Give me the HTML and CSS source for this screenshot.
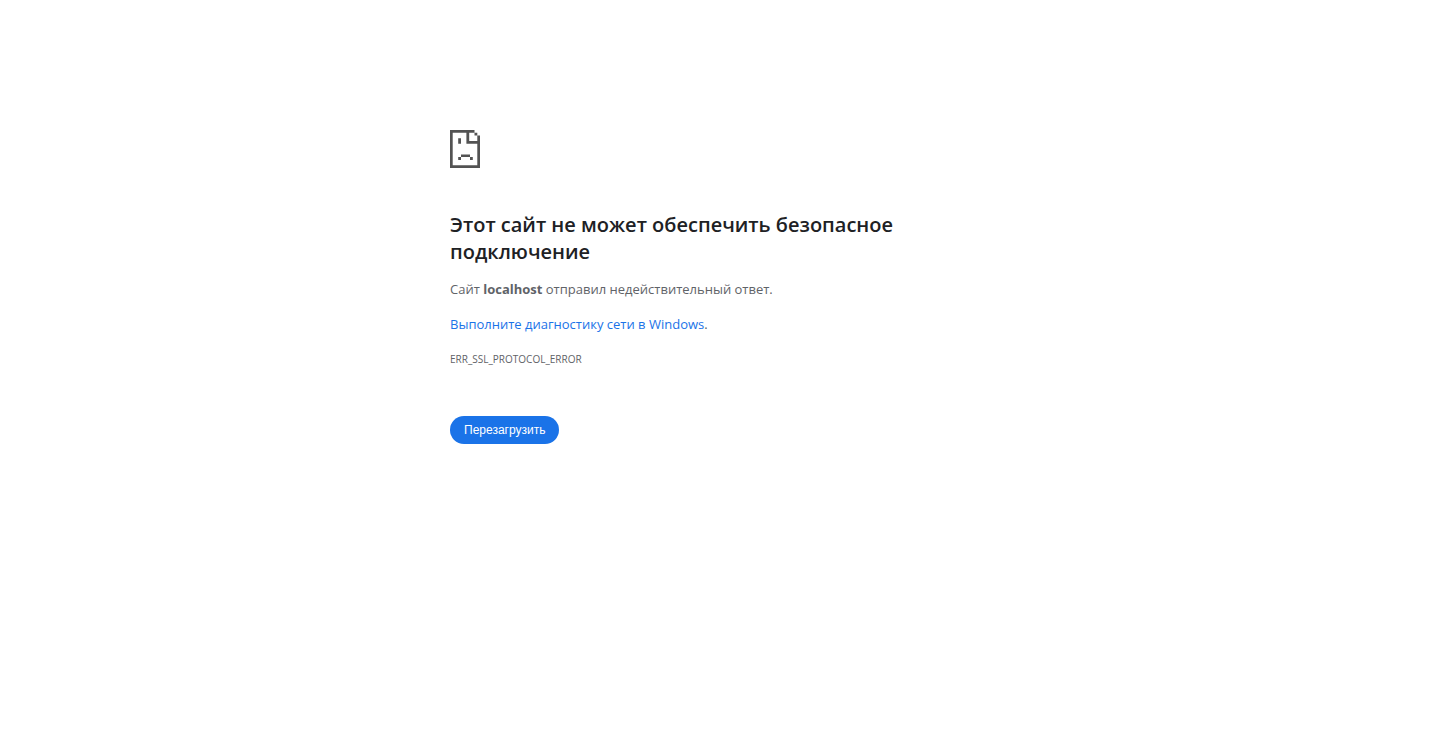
FILE: index.html
```html
<!DOCTYPE html>
<html lang="ru">
<head>
<meta charset="utf-8">
<title>localhost</title>
<link rel="stylesheet" href="styles.css">
</head>
<body>
<main class="error">
  <svg class="icon" viewBox="0 0 30 38" aria-hidden="true">
    <path fill="#535353" fill-rule="evenodd" d="M0 0H24.500V2.700H19.200V11H27.300V5.500H30V38H0ZM2.700 2.700V35.300H27.300V13.700H16.400V2.700ZM24.500 2.700H27.300V5.500H24.500ZM8.200 8.200H11V13.800H8.200ZM11 24.400H20V27.100H11ZM8.200 27.100H11V29.900H8.200ZM20 27.100H22.800V29.900H20Z"/>
  </svg>
  <h1 class="title">Этот сайт не может обеспечить безопасное подключение</h1>
  <p class="text">Сайт <strong>localhost</strong> отправил недействительный ответ.</p>
  <p class="text"><a class="link" href="#diagnose">Выполните диагностику сети в Windows</a>.</p>
  <p class="code">ERR_SSL_PROTOCOL_ERROR</p>
  <button class="reload" type="button">Перезагрузить</button>
</main>
</body>
</html>
```

FILE: styles.css
```css
body {
  margin: 0;
  background: #fff;
  color: #5f6368;
  font-family: "Segoe UI", "Open Sans", "Noto Sans", sans-serif;
  font-size: 13px;
  line-height: 20px;
}

.error {
  box-sizing: border-box;
  max-width: 540px;
  margin: 0 auto;
  padding-top: 130px;
}

.icon {
  display: block;
  width: 30px;
  height: 38px;
}

.title {
  max-width: 460px;
  margin: 43px 0 14px;
  color: #202124;
  font-size: 20px;
  font-weight: 600;
  line-height: 27px;
}

.text {
  margin: 0 0 15px;
}

.link {
  color: #1a73e8;
  text-decoration: none;
}

.code {
  margin: 0;
  font-size: 10px;
}

.reload {
  display: block;
  height: 28px;
  margin-top: 47px;
  padding: 0 14px;
  border: 0;
  border-radius: 14px;
  background: #1a73e8;
  color: #fff;
  font: 500 12px "Liberation Sans", Arial, sans-serif;
}
```
